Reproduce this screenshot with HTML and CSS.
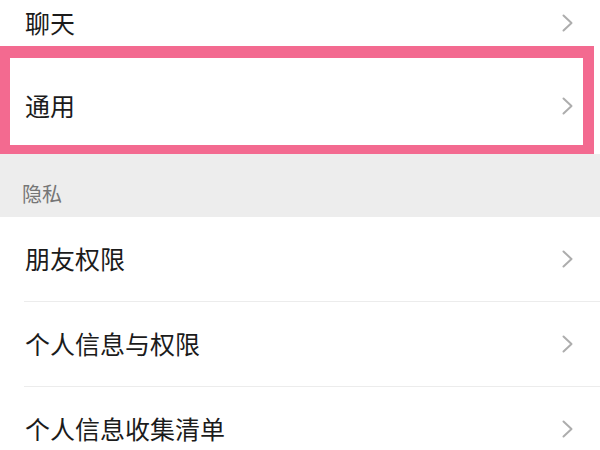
FILE: index.html
```html
<!DOCTYPE html>
<html lang="zh-CN">
<head>
<meta charset="utf-8">
<link rel="stylesheet" href="styles.css">
</head>
<body>
<div class="page">
  <div class="row row-top">
    <span class="label">聊天</span>
    <svg class="chev" viewBox="0 0 11 18" width="11" height="18"><polyline points="1.5,1.5 9.5,9 1.5,16.5"/></svg>
  </div>
  <div class="highlight">
    <div class="row row-hl">
      <span class="label">通用</span>
      <svg class="chev" viewBox="0 0 11 18" width="11" height="18"><polyline points="1.5,1.5 9.5,9 1.5,16.5"/></svg>
    </div>
  </div>
  <div class="section">隐私</div>
  <div class="row">
    <span class="label">朋友权限</span>
    <svg class="chev" viewBox="0 0 11 18" width="11" height="18"><polyline points="1.5,1.5 9.5,9 1.5,16.5"/></svg>
  </div>
  <div class="divider"></div>
  <div class="row">
    <span class="label">个人信息与权限</span>
    <svg class="chev" viewBox="0 0 11 18" width="11" height="18"><polyline points="1.5,1.5 9.5,9 1.5,16.5"/></svg>
  </div>
  <div class="divider"></div>
  <div class="row">
    <span class="label">个人信息收集清单</span>
    <svg class="chev" viewBox="0 0 11 18" width="11" height="18"><polyline points="1.5,1.5 9.5,9 1.5,16.5"/></svg>
  </div>
</div>
</body>
</html>
```

FILE: styles.css
```css
html, body {
  margin: 0;
  padding: 0;
  background: #ffffff;
}
body {
  width: 600px;
  height: 450px;
  overflow: hidden;
  font-family: "Noto Sans CJK SC", "Noto Sans", sans-serif;
}
.page {
  display: flex;
  flex-direction: column;
  width: 600px;
}
.row {
  display: flex;
  align-items: center;
  justify-content: space-between;
  height: 84px;
  padding: 0 27px 0 25px;
  background: #ffffff;
  flex-shrink: 0;
}
.row-top {
  height: 46px;
}
.label {
  font-size: 25px;
  line-height: 30px;
  color: #1b1b1b;
  margin-top: -3px;
}
.chev {
  display: block;
  flex-shrink: 0;
}
.chev polyline {
  fill: none;
  stroke: #adadad;
  stroke-width: 2;
  stroke-linecap: round;
  stroke-linejoin: round;
}
.highlight {
  border-style: solid;
  border-color: #f36a90;
  border-width: 12px 11px 9px 10px;
  margin-right: 6px;
  flex-shrink: 0;
}
.row-hl {
  height: 78px;
  padding: 9px 10px 0 15px;
}
.section {
  height: 63px;
  box-sizing: border-box;
  background: #ededed;
  display: flex;
  align-items: center;
  padding: 15px 0 0 22px;
  font-size: 20px;
  color: #767676;
  flex-shrink: 0;
}
.divider {
  height: 1px;
  margin-left: 24px;
  background: #ececec;
  flex-shrink: 0;
}
```
